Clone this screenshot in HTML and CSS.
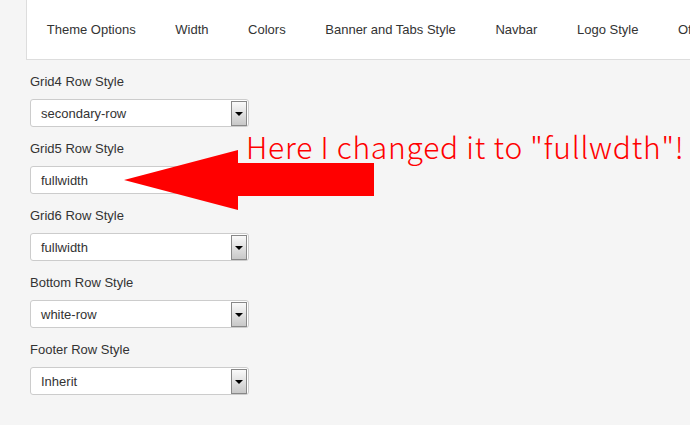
FILE: index.html
```html
<!DOCTYPE html>
<html lang="en">
<head>
    <meta charset="UTF-8">
    <meta name="viewport" content="width=device-width, initial-scale=1">
    <title>Theme Options</title>
    <link rel="stylesheet" href="styles.css">
</head>
<body>
<div class="tabs">
    <span class="tab">Theme Options</span>
    <span class="tab">Width</span>
    <span class="tab">Colors</span>
    <span class="tab">Banner and Tabs Style</span>
    <span class="tab">Navbar</span>
    <span class="tab">Logo Style</span>
    <span class="tab">Offcanvas</span>
</div>

<div class="options">
    <div class="group">
        <div class="label">Grid4 Row Style</div>
        <div class="select"><span class="value">secondary-row</span><span class="drop"></span></div>
    </div>
    <div class="group">
        <div class="label">Grid5 Row Style</div>
        <div class="select"><span class="value">fullwidth</span><span class="drop"></span></div>
    </div>
    <div class="group">
        <div class="label">Grid6 Row Style</div>
        <div class="select"><span class="value">fullwidth</span><span class="drop"></span></div>
    </div>
    <div class="group">
        <div class="label">Bottom Row Style</div>
        <div class="select"><span class="value">white-row</span><span class="drop"></span></div>
    </div>
    <div class="group">
        <div class="label">Footer Row Style</div>
        <div class="select"><span class="value">Inherit</span><span class="drop"></span></div>
    </div>
</div>

<!-- annotation drawn over the screenshot -->
<svg class="arrow" viewBox="0 0 690 425">
    <polygon fill="#ff0000" points="124,180 238,150 238,163 374,163 374,196 238,196 238,210"/>
</svg>
<div class="note">Here I changed it to "fullwdth"!</div>
</body>
</html>
```

FILE: styles.css
```css
body {
    margin: 0;
    background: #f5f5f5;
    font: 13px 'Liberation Sans', Arial, sans-serif;
    color: #333;
    position: relative;
    height: 425px;
    overflow: hidden;
}

.tabs {
    margin-left: 26px;
    padding-left: 0;
    height: 59px;
    background: #fff;
    border-left: 1px solid #ddd;
    border-bottom: 1px solid #ddd;
    display: flex;
    align-items: center;
    white-space: nowrap;
    overflow: hidden;
}

.tabs .tab {
    padding: 0 19.8px;
    flex: none;
}

.options {
    padding: 13px 0 0 30px;
}

.group {
    margin-bottom: 13px;
}

.label {
    line-height: 18px;
    margin-bottom: 8px;
}

.select {
    width: 217px;
    height: 26px;
    background: #fff;
    border: 1px solid #ccc;
    border-radius: 3px;
    display: flex;
    align-items: center;
    justify-content: space-between;
}

.select .value {
    padding-left: 10px;
}

.select .drop {
    width: 14px;
    height: 23px;
    margin-right: 1px;
    border: 1px solid #888;
    background: linear-gradient(#fafafa, #c8c8c8);
    position: relative;
}

.select .drop:after {
    content: "";
    position: absolute;
    left: 3px;
    top: 10px;
    border-left: 4px solid transparent;
    border-right: 4px solid transparent;
    border-top: 4px solid #000;
}

.arrow {
    position: absolute;
    left: 0;
    top: 0;
    width: 690px;
    height: 425px;
}

.note {
    position: absolute;
    left: 246px;
    top: 126px;
    color: #ff0000;
    font: 300 30px 'Noto Sans CJK JP', sans-serif;
    letter-spacing: 0.75px;
    line-height: 40px;
    white-space: nowrap;
}
```
